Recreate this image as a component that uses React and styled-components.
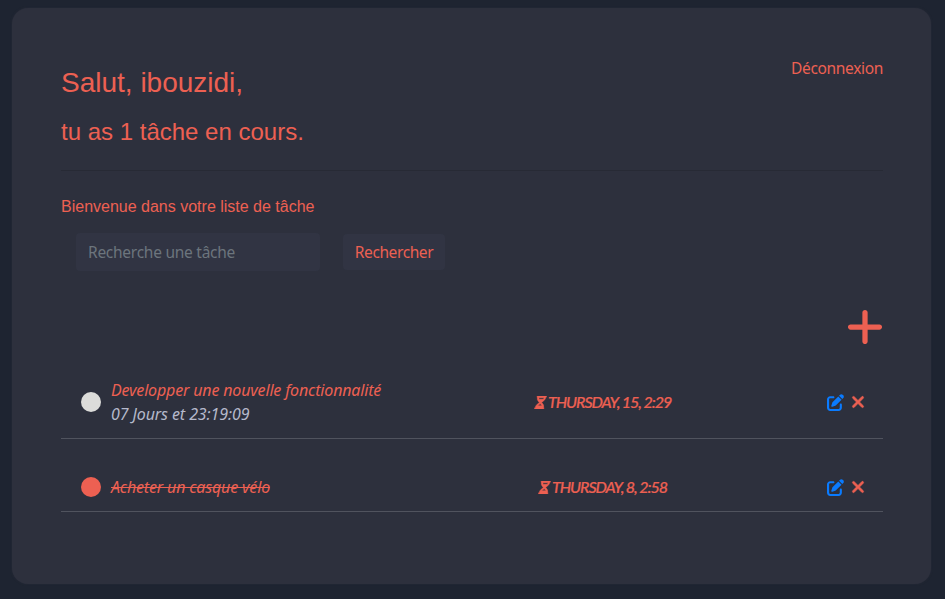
import React from "react";
import styled, { createGlobalStyle } from "styled-components";
import { FaPlus, FaPenToSquare, FaXmark, FaHourglassHalf } from "react-icons/fa6";

const coral = "#ed6052";

const GlobalStyle = createGlobalStyle`
  *, *::before, *::after { box-sizing: border-box; }
  html, body { margin: 0; background: #1e2431; }
  body { font: 16px/24px "Noto Sans", "Open Sans", sans-serif; color: ${coral}; }
  h1, h2, p, ul { margin: 0; padding: 0; font-weight: 400; }
`;

const Page = styled.div`
  height: 599px;
  padding: 8px 14px 15px 12px;
  overflow: hidden;
  white-space: nowrap;
`;

const Card = styled.main`
  height: 576px;
  padding: 48px 48px 0 49px;
  border-radius: 16px;
  background: #2d303d;
  box-shadow: 0 0 2px rgba(45, 48, 61, 0.7);
`;

const Header = styled.header`
  display: flex;
  justify-content: space-between;
  height: 115px;
  border-bottom: 1px solid #272a35;
`;

const Greeting = styled.div`
  font-family: "Liberation Sans", Arial, sans-serif;
`;

const Title = styled.h1`
  padding-top: 10px;
  font-size: 28px;
  line-height: 34px;
`;

const Subtitle = styled.h2`
  margin-top: 17px;
  font-size: 24px;
  line-height: 29px;
`;

const Logout = styled.a`
  color: inherit;
  font-size: 15.5px;
  letter-spacing: -0.33px;
`;

const Welcome = styled.p`
  margin-top: 24px;
  font-family: "Liberation Sans", Arial, sans-serif;
`;

const SearchForm = styled.form`
  display: flex;
  align-items: center;
  gap: 23px;
  margin: 14px 0 0 15px;
`;

const SearchInput = styled.input`
  width: 244px;
  height: 38px;
  padding: 0 12px;
  border: 0;
  border-radius: 4px;
  background: #313443;
  color: ${coral};
  font: inherit;
  font-size: 15.5px;
  letter-spacing: -0.26px;
  &::placeholder { color: #6c757d; opacity: 1; }
`;

const SearchButton = styled.button`
  width: 102px;
  height: 36px;
  padding: 0;
  border: 0;
  border-radius: 4px;
  background: #313443;
  color: ${coral};
  font: inherit;
  font-size: 15.5px;
  letter-spacing: -0.4px;
`;

const AddRow = styled.div`
  display: flex;
  justify-content: flex-end;
  height: 75px;
  margin-top: 32px;
`;

const AddButton = styled.a`
  display: block;
  width: 35px;
  height: 48px;
  svg { display: block; width: 42px; height: 42px; margin: 3px 0 0 -4px; }
`;

const TaskList = styled.ul`
  list-style: none;
`;

const TaskRow = styled.li`
  display: grid;
  grid-template-columns: 50px 1fr 140px 158px 56px;
  align-items: center;
  height: ${(p) => (p.$tall ? "61px" : "73px")};
  padding-top: ${(p) => (p.$tall ? "0" : "24px")};
  padding-bottom: ${(p) => (p.$tall ? "13px" : "0")};
  border-bottom: 1px solid #50535e;
`;

const Status = styled.span`
  width: 20px;
  height: 20px;
  margin-left: 20px;
  border-radius: 50%;
  background: ${(p) => (p.$done ? coral : "#dcdcda")};
`;

const TaskText = styled.div`
  font-style: italic;
`;

const TaskName = styled.div`
  letter-spacing: -0.16px;
  text-decoration: ${(p) => (p.$done ? "line-through" : "none")};
`;

const Countdown = styled.div`
  color: #b5b9cb;
  letter-spacing: -0.1px;
`;

const Due = styled.div`
  display: flex;
  align-items: center;
  justify-content: center;
  gap: 2px;
  font: italic 500 15px/24px Lato, sans-serif;
  letter-spacing: -1px;
  -webkit-text-stroke: 0.2px ${coral};
  text-transform: uppercase;
  svg {
    flex: none;
    width: 11px;
    height: 13px;
    stroke: ${coral};
    stroke-width: 22px;
    transform: skewX(-12deg);
  }
  span { transform: scaleX(1.07); transform-origin: left; }
`;

const Actions = styled.div`
  grid-column: 5;
  display: flex;
  align-items: center;
  gap: 5px;
`;

const EditIcon = styled(FaPenToSquare)`
  width: 17px;
  height: 17px;
  color: #0a7bff;
`;

const DeleteIcon = styled(FaXmark)`
  width: 18px;
  height: 18px;
  stroke: ${coral};
  stroke-width: 16px;
`;

const tasks = [
  { name: "Developper une nouvelle fonctionnalité", left: "07 Jours et 23:19:09", due: "Thursday, 15, 2:29", done: false },
  { name: "Acheter un casque vélo", due: "Thursday, 8, 2:58", done: true },
];

function Task({ task }) {
  return (
    <TaskRow $tall={!task.done}>
      <Status $done={task.done} />
      <TaskText>
        <TaskName $done={task.done}>{task.name}</TaskName>
        {task.left && <Countdown>{task.left}</Countdown>}
      </TaskText>
      <Due><FaHourglassHalf /><span>{task.due}</span></Due>
      <Actions><EditIcon /><DeleteIcon /></Actions>
    </TaskRow>
  );
}

export default function App() {
  return (
    <Page>
      <GlobalStyle />
      <Card>
        <Header>
          <Greeting>
            <Title>Salut, ibouzidi,</Title>
            <Subtitle>tu as 1 tâche en cours.</Subtitle>
          </Greeting>
          <Logout>Déconnexion</Logout>
        </Header>
        <Welcome>Bienvenue dans votre liste de tâche</Welcome>
        <SearchForm>
          <SearchInput placeholder="Recherche une tâche" />
          <SearchButton type="button">Rechercher</SearchButton>
        </SearchForm>
        <AddRow><AddButton><FaPlus /></AddButton></AddRow>
        <TaskList>{tasks.map((t) => <Task key={t.name} task={t} />)}</TaskList>
      </Card>
    </Page>
  );
}
